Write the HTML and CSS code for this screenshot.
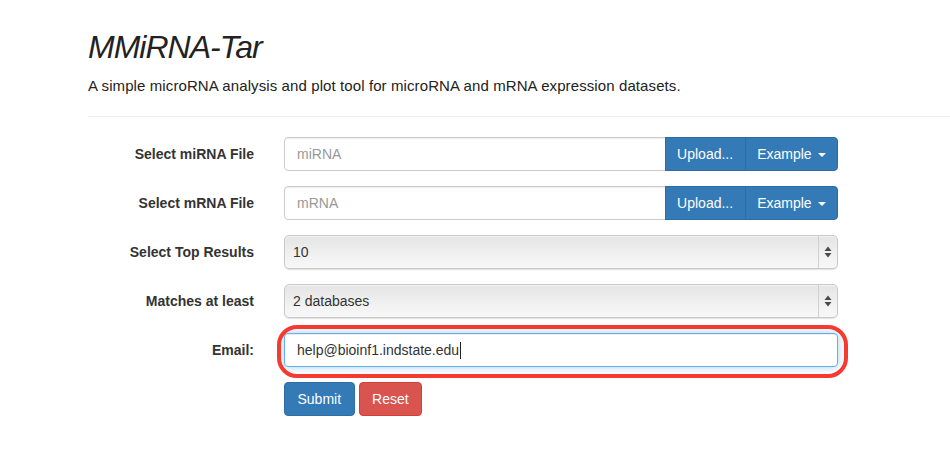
FILE: index.html
```html
<!DOCTYPE html>
<html>
<head>
<meta charset="utf-8">
<link rel="stylesheet" href="styles.css">
</head>
<body>
<div class="page">
  <header class="header">
    <h1 class="title">MMiRNA-Tar</h1>
    <p class="lead">A simple microRNA analysis and plot tool for microRNA and mRNA expression datasets.</p>
  </header>
  <hr class="rule">
  <form class="form">
    <div class="row">
      <label class="label">Select miRNA File</label>
      <div class="control group">
        <input class="input grow" type="text" placeholder="miRNA">
        <button type="button" class="btn btn-primary seg">Upload...</button>
        <button type="button" class="btn btn-primary seg last">Example <span class="caret"></span></button>
      </div>
    </div>
    <div class="row">
      <label class="label">Select mRNA File</label>
      <div class="control group">
        <input class="input grow" type="text" placeholder="mRNA">
        <button type="button" class="btn btn-primary seg">Upload...</button>
        <button type="button" class="btn btn-primary seg last">Example <span class="caret"></span></button>
      </div>
    </div>
    <div class="row">
      <label class="label">Select Top Results</label>
      <div class="control select-wrap">
        <select class="select"><option>10</option></select>
        <span class="arrows"><svg width="8" height="12" viewBox="0 0 8 12"><path d="M4 0.5 L7.5 5 L0.5 5 Z M0.5 7 L7.5 7 L4 11.5 Z" fill="#4a4a4a"/></svg></span>
      </div>
    </div>
    <div class="row">
      <label class="label">Matches at least</label>
      <div class="control select-wrap">
        <select class="select"><option>2 databases</option></select>
        <span class="arrows"><svg width="8" height="12" viewBox="0 0 8 12"><path d="M4 0.5 L7.5 5 L0.5 5 Z M0.5 7 L7.5 7 L4 11.5 Z" fill="#4a4a4a"/></svg></span>
      </div>
    </div>
    <div class="row">
      <label class="label">Email:</label>
      <div class="control email-wrap">
        <div class="input focus"><span>help@bioinf1.indstate.edu</span><span class="cursor"></span></div>
        <span class="highlight"></span>
      </div>
    </div>
    <div class="row actions">
      <span></span>
      <div class="control buttons">
        <button type="button" class="btn btn-primary submit">Submit</button>
        <button type="button" class="btn btn-danger">Reset</button>
      </div>
    </div>
  </form>
</div>
</body>
</html>
```
FILE: styles.css
```css
html, body {
  margin: 0;
  padding: 0;
  background: #fff;
}
body {
  font-family: "Liberation Sans", Arial, sans-serif;
  font-size: 14px;
  color: #333;
  overflow: hidden;
}
.page {
  padding-left: 88px;
}
.header {
  padding-top: 27px;
}
.title {
  margin: 0;
  font-size: 32px;
  font-weight: normal;
  font-style: italic;
  letter-spacing: -1px;
  line-height: 40px;
  color: #222;
}
.lead {
  margin: 9px 0 0;
  font-size: 15px;
  letter-spacing: 0.1px;
  line-height: 20px;
  color: #222;
}
.rule {
  margin: 20px 0 0;
  border: 0;
  border-top: 1px solid #eee;
}
.form {
  padding-top: 20px;
  width: 750px;
}
.row {
  display: grid;
  grid-template-columns: 166px 554px;
  column-gap: 30px;
  align-items: center;
  margin-bottom: 15px;
}
.label {
  text-align: right;
  font-weight: bold;
  color: #333;
}
.control {
  position: relative;
}
.group {
  display: flex;
}
.buttons {
  display: flex;
  gap: 4px;
}
.input {
  box-sizing: border-box;
  height: 34px;
  padding: 6px 12px;
  font: 14px/20px "Liberation Sans", Arial, sans-serif;
  color: #555;
  border: 1px solid #ccc;
  border-radius: 4px;
  box-shadow: inset 0 1px 1px rgba(0,0,0,.075);
  background: #fff;
  outline: none;
}
.input::placeholder {
  color: #999;
}
.grow {
  flex: 1;
  min-width: 0;
  border-radius: 4px 0 0 4px;
}
.btn {
  box-sizing: border-box;
  height: 34px;
  padding: 6px 12px;
  font: 14px/20px "Liberation Sans", Arial, sans-serif;
  border: 1px solid transparent;
  border-radius: 4px;
  color: #fff;
  cursor: pointer;
}
.btn-primary {
  background: #337ab7;
  border-color: #2e6da4;
}
.submit {
  padding: 6px 12.5px;
}
.btn-danger {
  background: #d9534f;
  border-color: #d43f3a;
  padding: 6px 12.5px;
}
.seg {
  border-radius: 0;
  margin-left: -1px;
  padding: 6px 11.5px;
}
.seg.last {
  border-radius: 0 4px 4px 0;
}
.caret {
  display: inline-block;
  width: 0;
  height: 0;
  margin-left: 2px;
  vertical-align: middle;
  border-top: 4px solid #fff;
  border-left: 4px solid transparent;
  border-right: 4px solid transparent;
}
.select-wrap {
  height: 34px;
}
.select {
  -webkit-appearance: none;
  appearance: none;
  box-sizing: border-box;
  width: 100%;
  height: 34px;
  padding: 0 8px;
  font: 14px "Liberation Sans", Arial, sans-serif;
  color: #333;
  border: 1px solid #c9c9c9;
  border-radius: 5px;
  background: linear-gradient(#e4e4e4, #f3f3f3 70%, #f7f7f7);
  box-shadow: inset 0 1px 1px rgba(255,255,255,.6), 0 1px 1px rgba(0,0,0,.12);
  outline: none;
}
.arrows {
  position: absolute;
  top: 1px;
  right: 1px;
  bottom: 1px;
  width: 18px;
  border-left: 1px solid #d0d0d0;
  display: flex;
  align-items: center;
  justify-content: center;
  pointer-events: none;
}
.focus {
  display: flex;
  align-items: center;
  border-color: #66afe9;
  box-shadow: inset 0 1px 1px rgba(0,0,0,.075), 0 0 8px rgba(102,175,233,.6);
  color: #333;
}
.cursor {
  display: inline-block;
  width: 1px;
  height: 17px;
  background: #222;
  margin-left: 1px;
}
.highlight {
  position: absolute;
  left: -7px;
  top: -8px;
  right: -10px;
  bottom: -11px;
  border: 4px solid #f53a30;
  border-radius: 20px;
  pointer-events: none;
}
```
